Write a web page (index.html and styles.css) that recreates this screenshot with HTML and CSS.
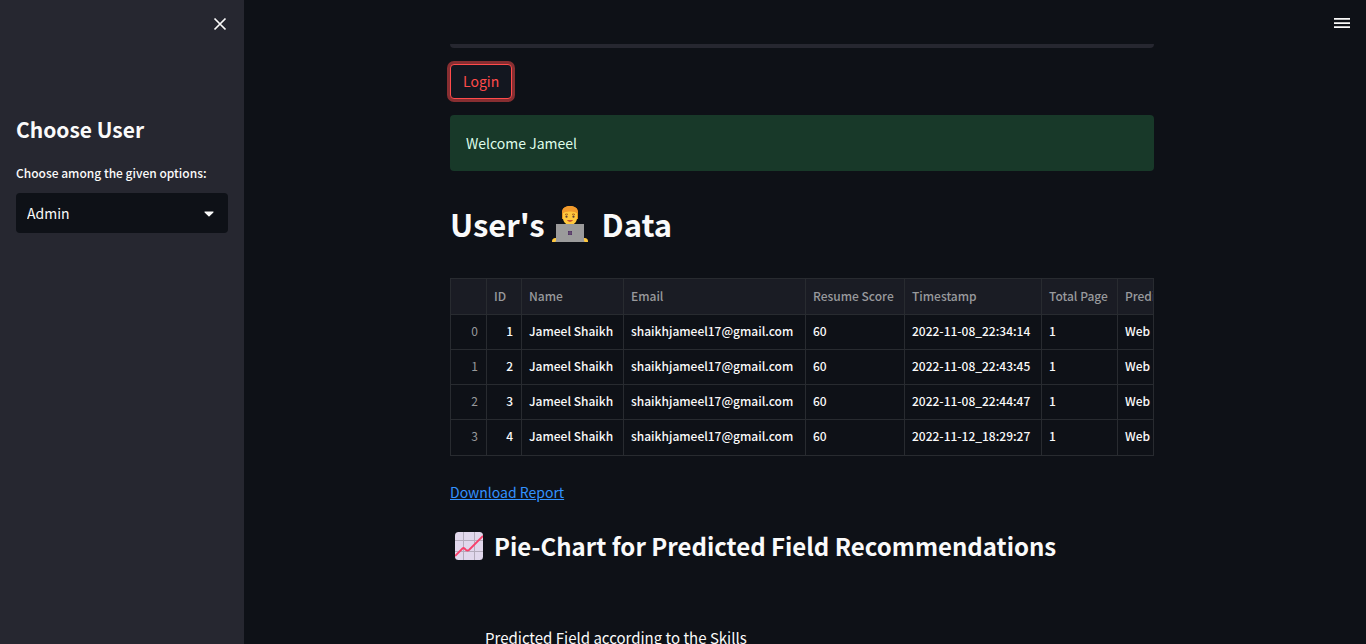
FILE: index.html
```html
<!DOCTYPE html>
<html lang="en">
<head>
<meta charset="utf-8">
<meta name="viewport" content="width=device-width, initial-scale=1">
<title>User's Data</title>
<link rel="stylesheet" href="styles.css">
</head>
<body>
<div class="app">
  <aside class="sidebar">
    <div class="sidebar-top">
      <button class="icon-button" type="button" aria-label="Close sidebar">
        <svg width="20" height="20" viewBox="0 0 20 20" fill="none" stroke="currentColor" stroke-width="1.7"><path d="M4.500 4.500 15.500 15.500M15.500 4.500 4.500 15.500"/></svg>
      </button>
    </div>
    <h2 class="sidebar-title">Choose User</h2>
    <label class="field-label" for="role">Choose among the given options:</label>
    <div class="select-box">
      <select class="select" id="role">
        <option>Admin</option>
        <option>User</option>
      </select>
      <svg class="select-arrow" width="10" height="6" viewBox="0 0 10 6" aria-hidden="true"><path d="M1 .6h8c.5 0 .7.5.4.8L5.500 5.200a.7.7 0 0 1-1 0L.6 1.400C.3 1.100.5.6 1 .6Z" fill="#fafafa"/></svg>
    </div>
  </aside>

  <div class="page">
    <header class="toolbar">
      <button class="icon-button" type="button" aria-label="Menu">
        <svg width="20" height="20" viewBox="0 0 20 20" fill="currentColor"><path d="M2 5h16v1.700H2zM2 9.200h16v1.700H2zM2 13.300h16V15H2z"/></svg>
      </button>
    </header>
    <main class="content">
      <input class="text-input" type="password" aria-label="Password">
      <button class="login" type="button">Login</button>
      <div class="alert" role="status">Welcome Jameel</div>

      <h1 class="title">User's<svg class="title-icon" viewBox="0 0 36 36" role="img" aria-label="Technologist">
          <path d="M6 32c0-9 4-14 12-14s12 5 12 14Z" fill="#ffc83d"/>
          <path d="M10 7c0-5 3.500-7 8-7s8 2 8 7v6H10Z" fill="#e59623"/>
          <path d="M14 15h8v6c-2 2-6 2-8 0Z" fill="#f0a72b"/>
          <path d="M11 7c2-1 4-2 7-2s5 1 7 2v5c0 4-3 7-7 7s-7-3-7-7Z" fill="#ffc83d"/>
          <path d="M10 7C10 2 13 0 18 0s8 2 8 7c-3-2-13-2-16 0Z" fill="#f19a2c"/>
          <path d="M13 8.500q2-1 3 0M20 8.500q1-1 3 0" stroke="#a95b16" fill="none"/>
          <circle cx="14.500" cy="10.700" r="1.100" fill="#5b3a3a"/><circle cx="21.500" cy="10.700" r="1.100" fill="#5b3a3a"/>
          <path d="M15.500 14.500q2.500 2 5 0Z" fill="#bb3b2f" stroke="#bb3b2f" stroke-width=".6"/>
          <path d="M0 36c0-3 1-4 4-4h28c3 0 4 1 4 4Z" fill="#ffc83d"/>
          <path d="M4 18h28v17l1 1H3l1-1Z" fill="#9b9b9b"/>
          <path d="M16 25h4v4h-4Z" fill="#533566"/><path d="M18 25v4M16 27h4" stroke="#796a82" stroke-width=".6"/>
        </svg>Data</h1>

      <div class="table-box">
        <table class="data">
          <colgroup><col class="c-index"><col class="c-id"><col class="c-name"><col class="c-email"><col class="c-score"><col class="c-time"><col class="c-page"><col class="c-field"></colgroup>
          <thead>
            <tr><th></th><th>ID</th><th>Name</th><th>Email</th><th>Resume Score</th><th>Timestamp</th><th>Total Page</th><th>Predicted Field</th></tr>
          </thead>
          <tbody>
            <tr><th>0</th><td class="num">1</td><td>Jameel Shaikh</td><td>shaikhjameel17@gmail.com</td><td>60</td><td>2022-11-08_22:34:14</td><td>1</td><td>Web Development</td></tr>
            <tr><th>1</th><td class="num">2</td><td>Jameel Shaikh</td><td>shaikhjameel17@gmail.com</td><td>60</td><td>2022-11-08_22:43:45</td><td>1</td><td>Web Development</td></tr>
            <tr><th>2</th><td class="num">3</td><td>Jameel Shaikh</td><td>shaikhjameel17@gmail.com</td><td>60</td><td>2022-11-08_22:44:47</td><td>1</td><td>Web Development</td></tr>
            <tr><th>3</th><td class="num">4</td><td>Jameel Shaikh</td><td>shaikhjameel17@gmail.com</td><td>60</td><td>2022-11-12_18:29:27</td><td>1</td><td>Web Development</td></tr>
          </tbody>
        </table>
      </div>

      <a class="download" href="#report">Download Report</a>

      <h2 class="subtitle"><svg class="subtitle-icon" viewBox="0 0 28 28" role="img" aria-label="Chart">
          <defs><clipPath id="tile"><rect width="28" height="28" rx="3.500"/></clipPath></defs>
          <g clip-path="url(#tile)" fill="none">
            <rect width="28" height="28" fill="#e1d8ec"/>
            <path d="M8.500 0v28M19.500 0v28M0 8.500h28M0 19.500h28" stroke="#b4acbc"/>
            <path d="M0 24 7.500 16.500Q8.500 15.500 9.500 16.500L11 18q1.500 1 3 0L28 4" stroke="#f8406b" stroke-width="1.800"/>
          </g>
        </svg>Pie-Chart for Predicted Field Recommendations</h2>

      <p class="chart-title">Predicted Field according to the Skills</p>
    </main>
  </div>
</div>
</body>
</html>
```
FILE: styles.css
```css
* { box-sizing: border-box; }

body {
  margin: 0;
  background: #0e1117;
  color: #fafafa;
  font-family: "Noto Sans CJK JP", "Noto Sans", sans-serif;
  font-size: 14px;
  line-height: 24px;
}

button, input, select { font: inherit; color: inherit; }
h1, h2, p { margin: 0; }

.app {
  display: flex;
  height: 100vh;
  overflow: hidden;
}

.sidebar {
  flex: 0 0 244px;
  padding: 0 16px;
  background: #262730;
}

.sidebar-top {
  display: flex;
  justify-content: flex-end;
  padding: 12px 0 0;
  margin-right: -4px;
}

.icon-button {
  display: flex;
  padding: 2px;
  border: 0;
  background: none;
}

.sidebar-title {
  margin-top: 79px;
  font-size: 21px;
  font-weight: 700;
  line-height: 28px;
}

.field-label {
  display: block;
  margin: 20px 0 10px;
  font-size: 12px;
  font-weight: 500;
  line-height: 20px;
}

.select-box { position: relative; }

.select {
  appearance: none;
  display: block;
  width: 100%;
  height: 40px;
  padding: 0 32px 0 11px;
  border: 0;
  border-radius: 4px;
  background: #0e1117;
}

.select-arrow {
  position: absolute;
  top: 18px;
  right: 14px;
  pointer-events: none;
}

.page {
  position: relative;
  flex: 1;
  min-width: 0;
  padding-right: 6px;
}

.toolbar {
  position: absolute;
  inset: 0 0 auto;
  display: flex;
  justify-content: flex-end;
  height: 44px;
  padding: 11px 12px 0;
  background: #0e1117;
}

.content {
  display: flex;
  flex-direction: column;
  align-items: stretch;
  max-width: 736px;
  margin: 0 auto;
  padding: 8px 16px 0;
}

.text-input {
  width: 100%;
  height: 40px;
  border: 0;
  border-radius: 4px;
  background: #262730;
}

.login {
  align-self: flex-start;
  height: 35px;
  margin-top: 16px;
  padding: 0 12px 1px;
  border: 1px solid #ff4b4b;
  border-radius: 4px;
  background: #131720;
  color: #ff4b4b;
  box-shadow: 0 0 0 3px rgba(255, 75, 75, 0.5);
}

.alert {
  margin-top: 16px;
  padding: 16px;
  border-radius: 4px;
  background: #183929;
  color: #dffde9;
}

.title {
  display: flex;
  align-items: center;
  margin-top: 32px;
  font-size: 31px;
  font-weight: 700;
  line-height: 42px;
}

.title-icon {
  width: 36px;
  height: 36px;
  margin: 0 14px 0 7px;
}

.table-box {
  margin-top: 33px;
  overflow: hidden;
  border: 1px solid #282b30;
}

.data {
  width: 762px;
  table-layout: fixed;
  border-collapse: separate;
  border-spacing: 0;
  font-size: 12px;
  line-height: 20px;
}

.c-index { width: 36px; }
.c-id { width: 35px; }
.c-name { width: 102px; }
.c-email { width: 182px; }
.c-score { width: 99px; }
.c-time { width: 137px; }
.c-page { width: 76px; }

.data th, .data td {
  height: 35px;
  padding: 6px 7px 8px;
  border-right: 1px solid #282b30;
  border-bottom: 1px solid #282b30;
  vertical-align: top;
  text-align: left;
  font-weight: 500;
  white-space: nowrap;
}

.data thead th {
  height: 36px;
  padding-top: 7px;
  background: #1a1c24;
}

.data th { color: #98999c; }
.data tbody th { font-weight: 400; }
.data tbody th, .data .num { text-align: right; padding-right: 8px; }
.data tbody tr:last-child > * { border-bottom: 0; }

.download {
  align-self: flex-start;
  margin-top: 24px;
  color: #3392ff;
  text-decoration: underline;
}

.subtitle {
  display: flex;
  align-items: center;
  margin-top: 24px;
  font-size: 24px;
  font-weight: 700;
  line-height: 35px;
}

.subtitle-icon {
  width: 28px;
  height: 28px;
  margin: 0 11px 0 5px;
}

.chart-title {
  margin-top: 63px;
  padding-left: 35px;
  font-size: 15px;
  white-space: nowrap;
}
```
